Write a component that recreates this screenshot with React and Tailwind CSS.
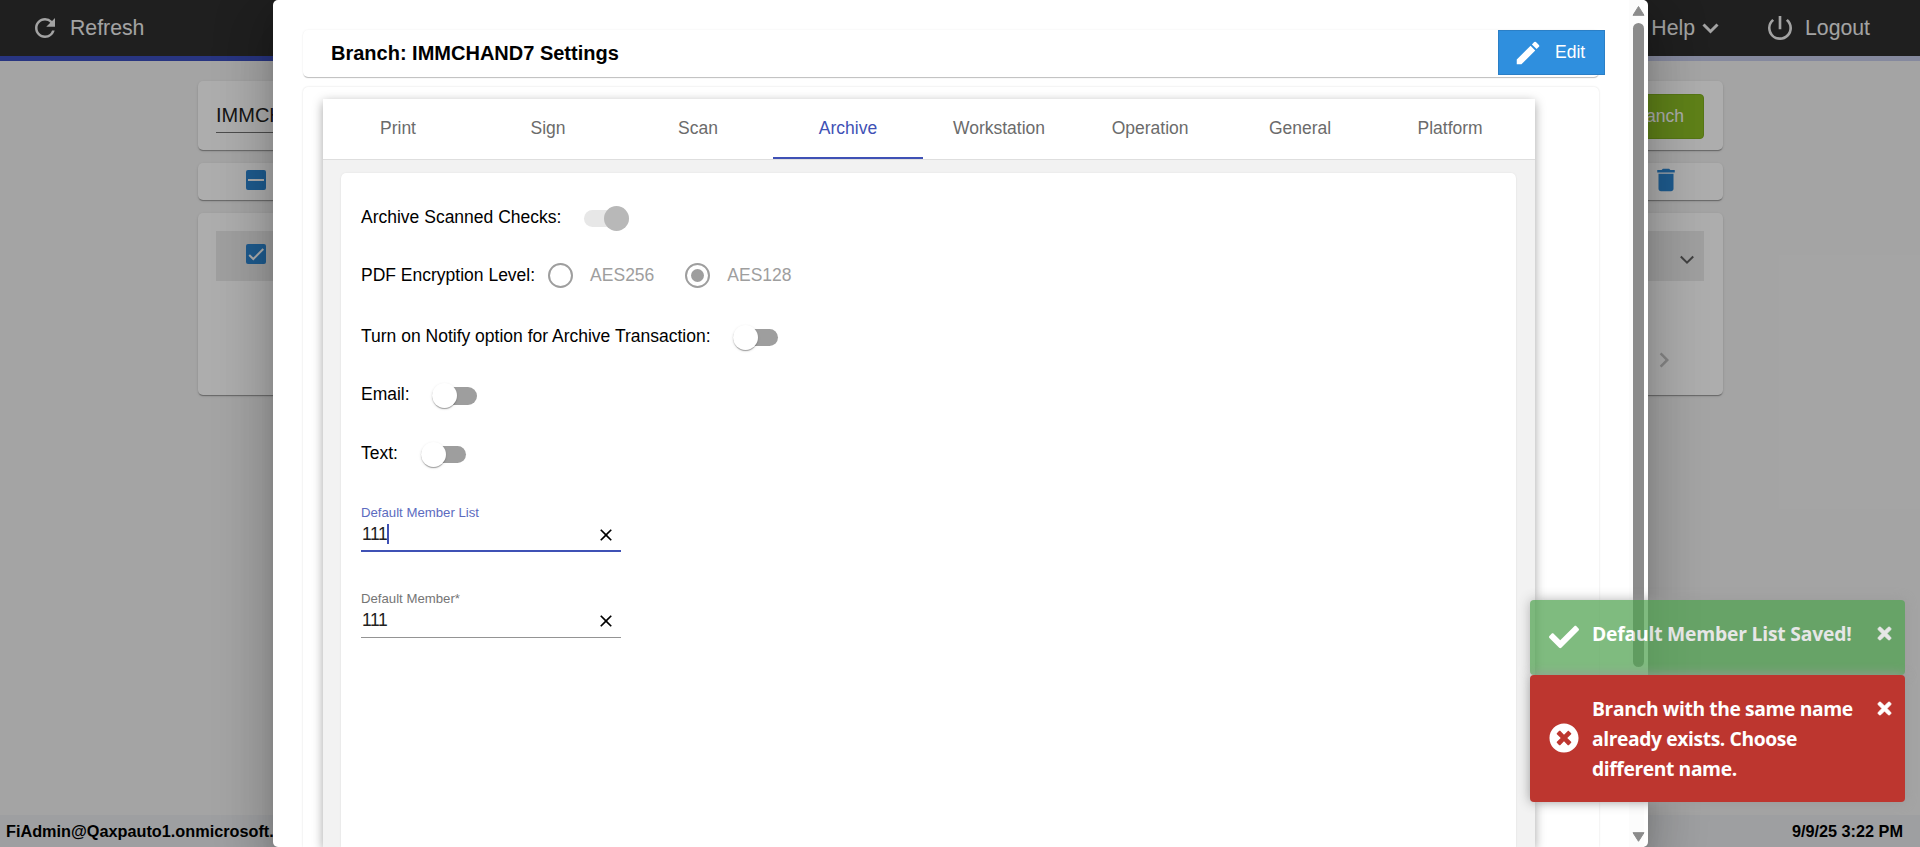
import React from "react";
import {
  MdRefresh,
  MdEdit,
  MdDelete,
  MdPowerSettingsNew,
  MdClose,
  MdChevronRight,
} from "react-icons/md";
import { FaCheck, FaTimes, FaTimesCircle } from "react-icons/fa";

const TABS = ["Print", "Sign", "Scan", "Archive", "Workstation", "Operation", "General", "Platform"];

const card =
  "rounded-[5px] bg-white shadow-[0_2px_1px_-1px_rgba(0,0,0,0.2),0_1px_1px_0_rgba(0,0,0,0.14),0_1px_3px_0_rgba(0,0,0,0.12)]";

const softCard =
  "rounded-[5px] bg-white shadow-[0_2px_1px_-1px_rgba(0,0,0,0.16),0_1px_1px_0_rgba(0,0,0,0.1),0_0_2px_0_rgba(0,0,0,0.08)]";

function TopBar() {
  return (
    <header className="flex h-[61px] items-center border-b-[5px] bg-[#2e2e2e] pr-[49px] pl-[30px] text-[21.25px] text-[#f0f0f0] [border-image:linear-gradient(to_right,#3c4fbe_50%,#c5cae9_50%)_1]">
      <MdRefresh className="size-[30px]" />
      <span className="mt-[2px] ml-[10px]">Refresh</span>
      <span className="mt-[2px] mr-px ml-auto">Help</span>
      <svg className="ml-[6px] h-[11px] w-[17px]" viewBox="0 0 17 11" fill="none" stroke="currentColor" strokeWidth="3">
        <path d="M1.5 1.5 8.5 8.5 15.5 1.5" />
      </svg>
      <MdPowerSettingsNew className="ml-[45px] size-[32px]" />
      <span className="mt-[2px] mr-px ml-[9px]">Logout</span>
    </header>
  );
}

function BranchList() {
  return (
    <main className="flex flex-1 flex-col gap-[13px] pt-[20px] pr-[197px] pl-[198px]">
      <section className={`${card} flex h-[69px] items-start justify-between pr-[19px] pl-[18px]`}>
        <div className="mt-[18px] h-[34px] w-[300px] border-b border-[#707070] text-[20px] leading-[32px] text-[#222]">
          IMMCHAND7
        </div>
        <div className="mt-[13px] flex h-[45px] w-[160px] items-center justify-end rounded-[4px] border border-[#7fae20] bg-[#8cbf26] pr-[19px] text-[17.5px] text-white">
          Add Branch
        </div>
      </section>
      <section className={`${card} flex h-[37px] items-center justify-between pr-[42px] pl-[48px]`}>
        <div className="mt-[-4px] flex size-[20px] items-center justify-center rounded-[2px] bg-[#2d86d2]">
          <span className="h-[2px] w-[16px] bg-white" />
        </div>
        <MdDelete className="mt-[-4px] size-[30px] text-[#2d86d2]" />
      </section>
      <section className={`${card} h-[182px] pt-[18px] pr-[19px] pl-[18px]`}>
        <div className="flex h-[50px] items-center justify-between bg-[#eaeaea] pr-[5px] pl-[30px]">
          <div className="mt-[-4px] flex size-[20px] items-center justify-center rounded-[2px] bg-[#2d86d2]">
            <svg className="size-[20px]" viewBox="0 0 20 20" fill="none" stroke="#fff" strokeWidth="2">
              <path d="M3.2 11 7.3 15 17.3 5" />
            </svg>
          </div>
          <svg className="mt-[8px] mr-[5px] h-[10px] w-[14px]" viewBox="0 0 14 10" fill="none" stroke="#606060" strokeWidth="2">
            <path d="M0.8 1.5 7 7.7 13.2 1.5" />
          </svg>
        </div>
        <div className="flex justify-end pt-[64px] pr-[25px]">
          <MdChevronRight className="size-[30px] text-[#c4c4c4]" />
        </div>
      </section>
    </main>
  );
}

function Toggle({ on, disabled, className }) {
  return (
    <span className={`relative block h-[17.5px] w-[45px] ${className}`}>
      <span className={`absolute inset-y-0 right-0 left-0 rounded-full ${disabled ? "bg-[#e7e7e7]" : "bg-[#9e9e9e]"}`} />
      <span
        className={`absolute top-[-4px] size-[25px] rounded-full ${
          on ? "right-0 bg-[#b8b8b8]" : "left-0 bg-white shadow-[0_2px_1px_-1px_rgba(0,0,0,0.2),0_1px_1px_0_rgba(0,0,0,0.14),0_1px_3px_0_rgba(0,0,0,0.12)]"
        }`}
      />
    </span>
  );
}

function Radio({ checked, label, className }) {
  return (
    <span className={`flex items-center text-[#9e9e9e] ${className}`}>
      <span className="flex size-[25px] items-center justify-center rounded-full border-2 border-[#9e9e9e]">
        {checked && <span className="size-[13px] rounded-full bg-[#9e9e9e]" />}
      </span>
      <span className="ml-[17px]">{label}</span>
    </span>
  );
}

function Field({ label, active, className }) {
  return (
    <div className={`flex h-[48px] w-[260px] flex-col ${active ? "border-b-2 border-[#3f51b5]" : "border-b border-[#949494]"} ${className}`}>
      <span className={`h-[19px] pt-px text-[13.2px] leading-[16px] ${active ? "text-[#5c6bc0]" : "text-[#757575]"}`}>{label}</span>
      <div className="flex h-[22px] items-center text-[17.5px] text-[#212121]">
        <span className="pl-px tracking-[-0.4px]">111</span>
        {active && <span className="h-[20px] w-[2px] bg-[#3f51b5]" />}
        <MdClose className="mt-px mr-[5px] ml-auto size-[20px] text-black" />
      </div>
    </div>
  );
}

function ArchivePanel() {
  return (
    <div className={`${softCard} mt-[13px] mr-[19px] ml-[18px] flex-1 rounded-b-none pt-[30px] pl-[20px] text-[17.5px] text-black`}>
      <div className="flex h-[28px] items-center">
        <span>Archive Scanned Checks:</span>
        <Toggle on disabled className="mt-[3px] ml-[23px]" />
      </div>
      <div className="mt-[30px] flex h-[28px] items-center">
        <span>PDF Encryption Level:</span>
        <Radio className="ml-[13px]" label="AES256" />
        <Radio className="ml-[31px]" label="AES128" checked />
      </div>
      <div className="mt-[33px] flex h-[28px] items-center">
        <span>Turn on Notify option for Archive Transaction:</span>
        <Toggle className="mt-[3px] ml-[22px]" />
      </div>
      <div className="mt-[30px] flex h-[28px] items-center">
        <span>Email:</span>
        <Toggle className="mt-[4px] ml-[22px]" />
      </div>
      <div className="mt-[31px] flex h-[28px] items-center">
        <span>Text:</span>
        <Toggle className="mt-[3px] ml-[23px]" />
      </div>
      <Field className="mt-[37px]" label="Default Member List" active />
      <Field className="mt-[38px]" label="Default Member*" />
    </div>
  );
}

function SettingsDialog() {
  return (
    <div className="absolute top-0 left-[273px] flex h-[847px] w-[1375px] overflow-visible rounded-[5px] bg-white shadow-[0_14px_19px_-9px_rgba(0,0,0,0.2),0_30px_48px_4px_rgba(0,0,0,0.14),0_11px_58px_10px_rgba(0,0,0,0.12)]">
      <div className="flex flex-1 flex-col pt-[30px] pr-[24px] pl-[30px]">
        <div className={`${softCard} mr-[6px] flex h-[47px] items-start pl-[28px]`}>
          <h1 className="mt-[8px] text-[20px] leading-[30px] font-bold text-black">Branch: IMMCHAND7 Settings</h1>
          <button className="mr-[-6px] ml-auto flex h-[45px] w-[107px] items-center border border-[#2b7fc6] bg-[#2f8fde] pl-[14px] text-[17.5px] text-white">
            <MdEdit className="size-[30px]" />
            <span className="mt-[-1px] ml-[12px]">Edit</span>
          </button>
        </div>
        <div className="mt-[10px] mr-[6px] flex flex-1 flex-col rounded-t-[5px] pt-[12px] pr-[64px] pl-[20px] shadow-[0_0_2px_rgba(0,0,0,0.15)]">
          <div className="flex flex-1 flex-col bg-[#f2f2f2] shadow-[0_3px_10px_rgba(0,0,0,0.36)]">
            <nav className="flex h-[61px] border-b border-[#dedede] bg-white">
              {TABS.map((tab) => (
                <div
                  key={tab}
                  className={`min-w-[150px] px-[30px] pt-[16px] text-center text-[17.5px] leading-[26px] ${
                    tab === "Archive" ? "border-b-2 border-[#3f51b5] text-[#3f51b5]" : "text-[#6b6b6b]"
                  }`}
                >
                  {tab}
                </div>
              ))}
            </nav>
            <ArchivePanel />
          </div>
        </div>
      </div>
      <div className="mr-[4px] flex w-[15px] flex-col items-center bg-[#fcfcfc] pl-[4px]">
        <svg className="mt-[6px] h-[10px] w-[13px] shrink-0" viewBox="0 0 13 10">
          <path d="M6.5 0.5 12 9.3H1Z" fill="#8b8b8b" stroke="#8b8b8b" strokeLinejoin="round" />
        </svg>
        <div className="mt-[7px] h-[644px] w-[11px] rounded-full bg-[#8b8b8b]" />
        <svg className="mt-auto mb-[5px] h-[10px] w-[13px] shrink-0" viewBox="0 0 13 10">
          <path d="M6.5 9.3 12 0.7H1Z" fill="#8b8b8b" stroke="#8b8b8b" strokeLinejoin="round" />
        </svg>
      </div>
    </div>
  );
}

function Toasts() {
  return (
    <div className="absolute top-[600px] left-[1530px] w-[375px] font-['Open_Sans','Noto_Sans',sans-serif] text-[20px] leading-[30px] font-bold text-white">
      <div className="flex h-[75px] rounded-[4px] bg-[#51a351] pt-[19px] pr-[11px] pl-[19px] opacity-[0.73] shadow-[0_0_12px_#999]">
        <FaCheck className="mt-[3px] size-[30px]" />
        <span className="ml-[13px] text-[19.3px] tracking-[-0.2px] whitespace-nowrap">Default Member List Saved!</span>
        <FaTimes className="mt-[5px] ml-auto size-[19px]" stroke="currentColor" strokeWidth="24" />
      </div>
      <div className="relative flex h-[127px] rounded-[4px] bg-[#bd362f] pt-[19px] pr-[11px] pl-[19px] shadow-[0_0_12px_#999]">
        <FaTimesCircle className="mt-[29px] size-[30px]" />
        <span className="ml-[13px] text-[19.3px] tracking-[-0.4px] whitespace-nowrap">
          Branch with the same name
          <br />
          already exists. Choose
          <br />
          different name.
        </span>
        <FaTimes className="mt-[5px] ml-auto size-[19px]" stroke="currentColor" strokeWidth="24" />
      </div>
    </div>
  );
}

export default function App() {
  return (
    <div className="relative h-[847px] w-[1920px] overflow-hidden font-['Liberation_Sans',Arial,sans-serif]">
      <div className="flex h-full flex-col bg-[#f2f2f2]">
        <TopBar />
        <BranchList />
        <footer className="flex h-[32px] items-center justify-between bg-[#e9ebed] pt-px pr-[17px] pl-[6px] text-[16.25px] font-bold text-black">
          <span>FiAdmin@Qaxpauto1.onmicrosoft.com</span>
          <span>9/9/25 3:22 PM</span>
        </footer>
      </div>
      <div className="absolute inset-0 bg-black/32" />
      <SettingsDialog />
      <Toasts />
    </div>
  );
}
